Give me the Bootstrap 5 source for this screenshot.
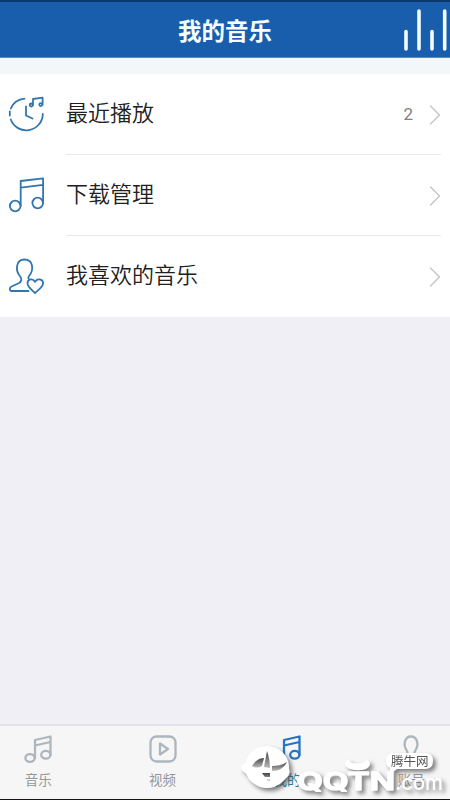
<!DOCTYPE html>
<html lang="zh-CN">
<head>
<meta charset="utf-8">
<meta name="viewport" content="width=device-width, initial-scale=1">
<title>我的音乐</title>
<link href="https://cdn.jsdelivr.net/npm/bootstrap@5.3.0/dist/css/bootstrap.min.css" rel="stylesheet">
<style>
body{font-family:"Noto Sans CJK SC","Noto Sans",sans-serif;background:#efeff5;color:#202020}
.screen{height:800px;width:450px}
svg{fill:none;stroke-linecap:round;stroke-linejoin:round;display:block;flex:none}
.topbar{height:58px;background:#185ead;border-top:2px solid #0b396e;border-bottom:1px solid #5c87ba;color:#f4ffff}
.topbar h1{font-size:23.5px;line-height:34px;margin:0;padding-top:1px}
.bars{right:0;top:0;stroke:#f0fcff;stroke-width:3.6}
.spacer{height:16px;background:#f4f7f9}
.music-list{padding-right:9px}
.entry{height:81px;padding-left:6px}
.entry-icon{stroke:#3275b1;stroke-width:1.8;margin-bottom:2px}
.entry-body{margin-left:20px;font-size:22px;font-weight:350;padding-bottom:3px;border-bottom:1.500px solid #e8e8eb}
.entry-body>span:first-child{padding-bottom:2px}
.entry:last-child .entry-body{border-color:#fff}
.count{font-family:Roboto,sans-serif;font-weight:400;font-size:17px;color:#808080;margin-right:16px;padding-top:4px}
.arrow{stroke:#c4c5c8;stroke-width:1.4;margin-top:2px}
.tabs{height:76px;background:#f6f6f7;border-top:2px solid #e1e1e8;border-bottom:1px solid #171217}
.tab-item{width:124.4px;font-size:13.5px;line-height:20px;color:#949698;padding-top:8px;text-decoration:none}
.tabs-inner{margin-left:-24px;width:498px}
.tab-icon{stroke:#adb6bd;stroke-width:2.3;margin-bottom:5px}
.on{color:#267f99}.on .tab-icon{stroke:#2574c7}
.stamp{left:235px;top:735px;filter:drop-shadow(3px 3px 2px #444a);pointer-events:none}
</style>
<script src="https://cdn.jsdelivr.net/npm/bootstrap@5.3.0/dist/js/bootstrap.bundle.min.js"></script>
</head>
<body>
<div class="screen d-flex flex-column position-relative overflow-hidden">
<header class="topbar d-flex align-items-center justify-content-center position-relative flex-shrink-0">
<h1 class="fw-bold">我的音乐</h1>
<svg class="bars position-absolute" width="50" height="54"><path d="M6 29.500v17.500M19 9v38M32 29.500v17.500M44.700 9v38"/></svg>
</header>
<div class="spacer flex-shrink-0"></div>
<main class="flex-grow-1">
<div class="music-list bg-white">
<a class="entry d-flex text-reset text-decoration-none">
<svg class="entry-icon align-self-center" width="40" height="40"><path d="M18.500 4.600A16.500 16.500 0 0 0 4.800 14.500M3.800 17.500v4M4.800 25.500A16.500 16.500 0 0 0 36.800 20M20 12.500V21.500l6.500 3M27 11V5l9.600-1.400v7"/><circle cx="25.200" cy="11" r="1.500"/><circle cx="34.800" cy="10.600" r="1.500"/></svg>
<div class="entry-body d-flex align-items-center flex-grow-1"><span class="flex-grow-1">最近播放</span><span class="count">2</span><svg class="arrow" width="12" height="22"><path d="m1.500 3 9 9-9 9"/></svg></div>
</a>
<a class="entry d-flex text-reset text-decoration-none">
<svg class="entry-icon align-self-center" width="40" height="40"><path d="M14.700 31V6l22.400-2.600v25M14.700 12.600l22.400-2.700"/><circle cx="9.200" cy="31" r="5.300"/><circle cx="31.700" cy="28" r="5.300"/></svg>
<div class="entry-body d-flex align-items-center flex-grow-1"><span class="flex-grow-1">下载管理</span><svg class="arrow" width="12" height="22"><path d="m1.500 3 9 9-9 9"/></svg></div>
</a>
<a class="entry d-flex text-reset text-decoration-none">
<svg class="entry-icon align-self-center" width="40" height="40"><path d="M22.500 35H5.600c-2.500 0-2.300-3.500 0-4.500l7-3.300c3-1.500 3.500-4.300 1.600-6.700-5.300-6.500-4.300-17 4.300-17 8.500 0 9.800 10 4.600 16.500-1.100 1.600-1 2.700.4 3.600M29 37c-4-3.800-7.500-6-7.500-9.700 0-4.600 5.500-5.300 7.500-1.400 2-3.900 8.100-3.200 8.100 1.400 0 3.700-4.100 5.900-8.100 9.700Z"/></svg>
<div class="entry-body d-flex align-items-center flex-grow-1"><span class="flex-grow-1">我喜欢的音乐</span><svg class="arrow" width="12" height="22"><path d="m1.500 3 9 9-9 9"/></svg></div>
</a>
</div>
</main>
<nav class="tabs flex-shrink-0">
<div class="tabs-inner d-flex">
<a class="tab-item d-flex flex-column align-items-center"><svg class="tab-icon" width="30" height="30"><path d="M12 24V6l15.500-3.500V21M12 11.500 27.500 8"/><ellipse cx="7" cy="24" rx="4.600" ry="3.900"/><ellipse cx="22.800" cy="20.800" rx="4.600" ry="3.900"/></svg>音乐</a>
<a class="tab-item d-flex flex-column align-items-center"><svg class="tab-icon" width="30" height="30"><rect x="2.500" y="2.500" width="25" height="25" rx="6"/><path d="M12 9.500v11l8-5.500Z"/></svg>视频</a>
<a class="tab-item on d-flex flex-column align-items-center"><svg class="tab-icon" width="30" height="30"><path d="M12 24V6l15.500-3.500V21M12 11.500 27.500 8"/><ellipse cx="7" cy="24" rx="4.600" ry="3.900"/><ellipse cx="22.800" cy="20.800" rx="4.600" ry="3.900"/></svg>我的</a>
<a class="tab-item d-flex flex-column align-items-center"><svg class="tab-icon" width="30" height="30"><path d="M3 27.500c0-4 2-5 6-6.300 3-1 3-3 1.500-5C7 11 8.500 2.500 15 2.500S23 11 19.500 16.200c-1.500 2-1.500 4 1.500 5 4 1.300 6 2.300 6 6.300Z"/></svg>账号</a>
</div>
</nav>
<svg class="stamp position-absolute" width="215" height="65">
<defs><linearGradient id="blade" x2="0" y2="1"><stop stop-color="#444"/><stop offset="1" stop-color="#bbb"/></linearGradient></defs>
<ellipse cx="32" cy="32" rx="22" ry="21" fill="#fff"/>
<path d="M10 28c-6 2-5 7 0 10 12 9 30 12 40 6 6-4 6-10 1-15" fill="#fff"/>
<g fill="url(#blade)"><path d="M17 31c3-5 7-8 12-8l-2 8q-5 3-10 0Z"/><path d="M32 16c2 6 3 11 3 17l-6-1c1-6 2-11 3-16Z"/><path d="M37 31c5 0 10-1 15-4-3 6-8 9-15 9Z"/><path d="M27 38h8v8l-3-1Z"/></g>
<path d="M12 38c12 6 29 8 39 0" stroke="#fff" stroke-width="2.500"/>
<g fill="#fff" font-family="Inter, sans-serif" font-weight="600">
<g stroke="#fff" stroke-width="1.500" font-size="24">
<text x="62" y="54.500" textLength="98" lengthAdjust="spacingAndGlyphs">QQTN</text>
</g>
<text x="160" y="54.500" font-size="21" font-weight="500" textLength="48" lengthAdjust="spacingAndGlyphs">.com</text>
</g>
<path d="M113 26c2 5 17 5 19 0 4 3 1 8-9 8s-14-5-10-8Z" fill="#fff" stroke="#fff" stroke-width="2.500"/>
<path d="M159 18h31q8 0 8 8t-8 8h-28l-8 6 1-7q-4-2-4-7 0-8 8-8Z" fill="#fff"/>
<text x="156" y="31" fill="#555" font-family="Noto Sans CJK SC, sans-serif" font-size="12.500">腾牛网</text>
</svg>
</div>
</body>
</html>
